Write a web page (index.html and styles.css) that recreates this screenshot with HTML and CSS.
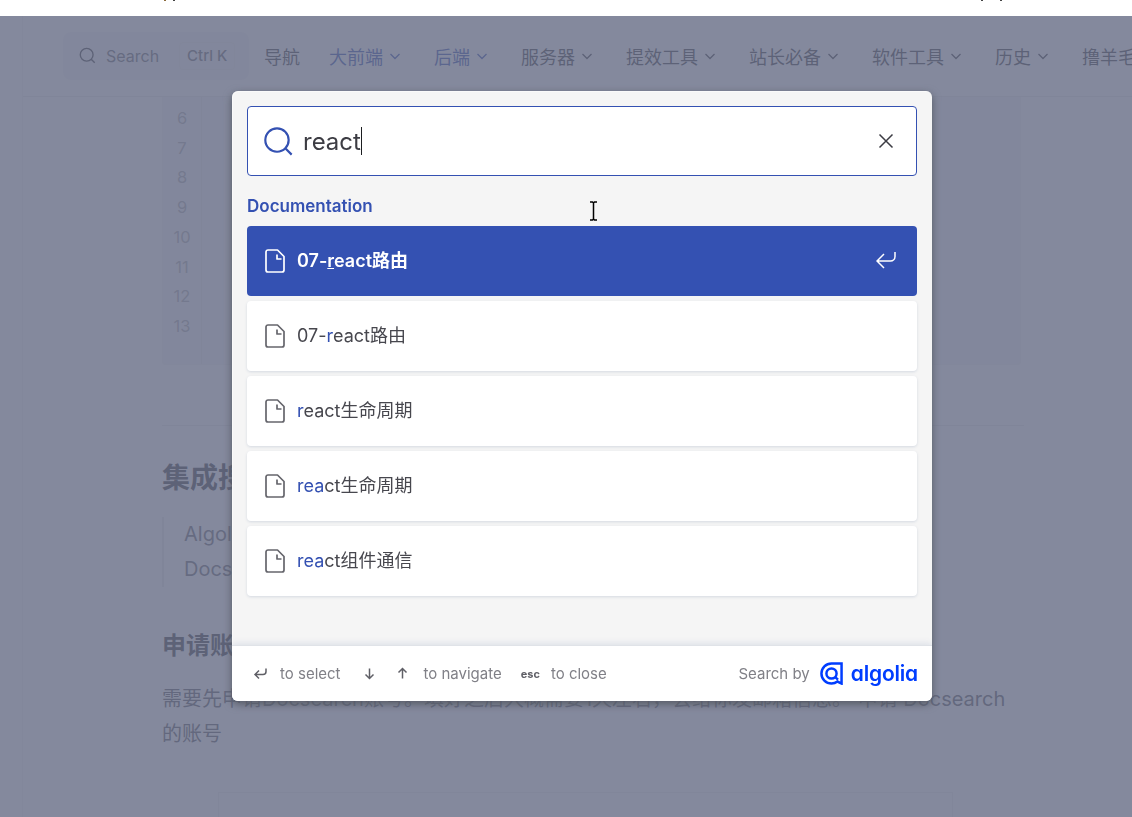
FILE: index.html
```html
<!DOCTYPE html>
<html lang="zh-CN">
<head>
    <meta charset="UTF-8">
    <meta name="viewport" content="width=device-width, initial-scale=1.0">
    <title>react 搜索</title>
    <link rel="stylesheet" href="styles.css">
</head>
<body>

    <div class="top-strip"></div>

    <div class="page">
        <header class="nav">
            <div class="nav-search">
                <svg class="nav-search-icon" viewBox="0 0 20 20"><path d="M14.386 14.386l4.088 4.088-4.088-4.088A7.533 7.533 0 1 1 3.733 3.733a7.533 7.533 0 0 1 10.653 10.653z"/></svg>
                <span class="nav-search-text">Search</span>
                <span class="nav-kbd">Ctrl K</span>
            </div>
            <a class="nav-item">导航</a>
            <a class="nav-item nav-active">大前端<svg class="chev" viewBox="0 0 12 12"><path d="M1.500 4l4.500 4.500L10.500 4"/></svg></a>
            <a class="nav-item nav-active">后端<svg class="chev" viewBox="0 0 12 12"><path d="M1.500 4l4.500 4.500L10.500 4"/></svg></a>
            <a class="nav-item">服务器<svg class="chev" viewBox="0 0 12 12"><path d="M1.500 4l4.500 4.500L10.500 4"/></svg></a>
            <a class="nav-item">提效工具<svg class="chev" viewBox="0 0 12 12"><path d="M1.500 4l4.500 4.500L10.500 4"/></svg></a>
            <a class="nav-item">站长必备<svg class="chev" viewBox="0 0 12 12"><path d="M1.500 4l4.500 4.500L10.500 4"/></svg></a>
            <a class="nav-item">软件工具<svg class="chev" viewBox="0 0 12 12"><path d="M1.500 4l4.500 4.500L10.500 4"/></svg></a>
            <a class="nav-item">历史<svg class="chev" viewBox="0 0 12 12"><path d="M1.500 4l4.500 4.500L10.500 4"/></svg></a>
            <a class="nav-item">撸羊毛</a>
        </header>

        <main class="content">
            <div class="code-block">
                <div class="line-numbers">
                    <span>6</span><span>7</span><span>8</span><span>9</span><span>10</span><span>11</span><span>12</span><span>13</span>
                </div>
            </div>
            <hr class="rule">
            <h2 class="title">集成搜索</h2>
            <blockquote class="quote">
                <p>Algolia 是一个搜索服务</p>
                <p>Docsearch 是它的文档搜索</p>
            </blockquote>
            <h3 class="subtitle">申请账号</h3>
            <p class="para">需要先申请Docsearch账号。填好之后大概需要1天左右&#65292;会给你发邮箱信息。 申请 Docsearch的账号</p>
            <div class="shot"></div>
        </main>
    </div>

    <div class="overlay"></div>

    <div class="modal">
        <div class="searchbar">
            <svg class="search-icon" viewBox="0 0 20 20"><path d="M14.386 14.386l4.088 4.088-4.088-4.088A7.533 7.533 0 1 1 3.733 3.733a7.533 7.533 0 0 1 10.653 10.653z"/></svg>
            <span class="query">react</span><span class="caret"></span>
            <svg class="close-icon" viewBox="0 0 20 20"><path d="M3.500 3.500l13 13M16.500 3.500l-13 13"/></svg>
        </div>

        <div class="hits">
            <div class="hits-label">Documentation</div>

            <div class="hit hit-selected">
                <svg class="doc-icon" viewBox="0 0 20 24"><path d="M12.500 1H3A2 2 0 0 0 1 3v18a2 2 0 0 0 2 2h14a2 2 0 0 0 2-2V7.500L12.500 1zM12 5.500V10h4.500"/></svg>
                <span class="hit-title">07-<u>r</u>eact路由</span>
                <svg class="enter-icon" viewBox="0 0 20 20"><path d="M19 1v4.500c0 2.500-2 4.500-4.500 4.500H1M8 17l-7-7 7-7"/></svg>
            </div>
            <div class="hit">
                <svg class="doc-icon" viewBox="0 0 20 24"><path d="M12.500 1H3A2 2 0 0 0 1 3v18a2 2 0 0 0 2 2h14a2 2 0 0 0 2-2V7.500L12.500 1zM12 5.500V10h4.500"/></svg>
                <span class="hit-title">07-<mark>r</mark>eact路由</span>
            </div>
            <div class="hit">
                <svg class="doc-icon" viewBox="0 0 20 24"><path d="M12.500 1H3A2 2 0 0 0 1 3v18a2 2 0 0 0 2 2h14a2 2 0 0 0 2-2V7.500L12.500 1zM12 5.500V10h4.500"/></svg>
                <span class="hit-title"><mark>r</mark>eact生命周期</span>
            </div>
            <div class="hit">
                <svg class="doc-icon" viewBox="0 0 20 24"><path d="M12.500 1H3A2 2 0 0 0 1 3v18a2 2 0 0 0 2 2h14a2 2 0 0 0 2-2V7.500L12.500 1zM12 5.500V10h4.500"/></svg>
                <span class="hit-title"><mark>rea</mark>ct生命周期</span>
            </div>
            <div class="hit">
                <svg class="doc-icon" viewBox="0 0 20 24"><path d="M12.500 1H3A2 2 0 0 0 1 3v18a2 2 0 0 0 2 2h14a2 2 0 0 0 2-2V7.500L12.500 1zM12 5.500V10h4.500"/></svg>
                <span class="hit-title"><mark>rea</mark>ct组件通信</span>
            </div>
        </div>

        <footer class="footer">
            <div class="footer-keys">
                <svg class="key-icon key-first" viewBox="0 0 15 15"><path d="M13 2.500v3c0 1.700-1.300 3-3 3H2.500M6 4.500l-4 4 4 4"/></svg>
                <span class="key-label">to select</span>
                <svg class="key-icon key-down" viewBox="0 0 15 15"><path d="M7.500 2.500v10M3.500 8.500l4 4 4-4"/></svg>
                <svg class="key-icon key-up" viewBox="0 0 15 15"><path d="M7.500 12.500v-10M3.500 6.500l4-4 4 4"/></svg>
                <span class="key-label key-nav">to navigate</span>
                <span class="key-esc">esc</span>
                <span class="key-label">to close</span>
            </div>
            <div class="footer-logo">
                <span class="search-by">Search by</span>
                <svg class="algolia-mark" viewBox="0 0 24 24"><path d="M22.500 1.500H12A10.500 10.500 0 1 0 12 22.500c2.300 0 4.500-.8 6.200-2.100l4.300 2.100z"/><circle cx="12" cy="12" r="5.300"/><path d="M15.800 15.800l3 2.600"/></svg>
                <span class="algolia-word">algolia</span>
            </div>
        </footer>
    </div>

    <svg class="ibeam" viewBox="0 0 9 20"><path d="M1 1h2.500l1 1 1-1H8M4.500 2v16M1 19h2.500l1-1 1 1H8"/></svg>

</body>
</html>
```

FILE: styles.css
```css
* {
    box-sizing: border-box;
}
html, body {
    margin: 0;
    height: 817px;
    overflow: hidden;
}
body {
    font-family: Inter, "Noto Sans CJK SC", sans-serif;
    color: #3c3c43;
    background: #fff;
}
/* bottoms of clipped glyphs along the top edge */
.top-strip {
    height: 16px;
    background-color: #fff;
    background-image:
        linear-gradient(#8a6a3a, #8a6a3a),
        linear-gradient(#444, #444),
        linear-gradient(#444, #444),
        linear-gradient(#444, #444);
    background-size: 2px 1px, 2px 1px, 2px 1px, 2px 1px;
    background-position: 164px 0, 173px 0, 981px 0, 1000px 0;
    background-repeat: no-repeat;
}

/* page behind the dialog */
.page {
    height: 801px;
    overflow: hidden;
    margin-left: 22px;
    border-left: 1px solid #f2f2f2;
}
.nav {
    display: flex;
    align-items: center;
    height: 81px;
    padding: 0 0 1px 40px;
    border-bottom: 1px solid #ececec;
    white-space: nowrap;
    font-size: 18px;
}
.nav-search {
    display: flex;
    flex: none;
    align-items: center;
    width: 186px;
    height: 48px;
    margin-right: 15px;
    padding-left: 16px;
    border-radius: 8px;
    background: #f6f6f7;
}
.nav-search-icon {
    flex: none;
    width: 17px;
    height: 17px;
    fill: none;
    stroke: #3c3c43;
    stroke-width: 1.6;
}
.nav-search-text {
    margin-left: 10px;
    font-size: 16px;
    color: #6b6b73;
}
.nav-kbd {
    margin-left: 20px;
    padding: 0 7px;
    height: 28px;
    line-height: 26px;
    font-size: 15px;
    font-weight: 500;
    color: #6b6b73;
    border: 1px solid #eeeeef;
    border-radius: 4px;
}
.nav-item {
    display: flex;
    flex: none;
    align-items: center;
    margin-right: 30px;
    color: #3c3c43;
}
.nav-search + .nav-item {
    margin-right: 29px;
}
.nav-active {
    color: #3451b2;
}
.chev {
    width: 12px;
    height: 12px;
    margin: 0 3px 0 6px;
    fill: none;
    stroke: currentColor;
    stroke-width: 1.300;
}
.content {
    padding-left: 139px;
    width: 998px;
    font-size: 20px;
    line-height: 35px;
}
.code-block {
    height: 268px;
    background: #f6f6f7;
    border-radius: 0 0 4px 4px;
    border: 1px solid #f2f2f2;
    border-top: 0;
}
.line-numbers {
    display: flex;
    flex-direction: column;
    width: 39px;
    height: 100%;
    padding-top: 7px;
    border-right: 1px solid #ececec;
    text-align: center;
    color: #aeaeb2;
    font-size: 16.500px;
    line-height: 29.700px;
}
.rule {
    height: 1px;
    margin: 60px -3px 0 0;
    border: 0;
    background: #e8e8e8;
}
.title {
    margin: 30px 0 0;
    font-size: 28px;
    line-height: 44px;
    font-weight: 700;
}
.quote {
    margin: 17px 0 0;
    padding-left: 20px;
    border-left: 2px solid #ececec;
    color: #6b6b73;
}
.quote p {
    margin: 0;
}
.subtitle {
    margin: 41px 0 0;
    font-size: 24px;
    line-height: 36px;
    font-weight: 700;
}
.para {
    margin: 18px 0 0;
    line-height: 35.400px;
    color: #5c5c63;
}
.shot {
    height: 200px;
    margin: 39px 68px 0 56px;
    border: 1px solid #f0f0f0;
}

/* dialog */
.overlay {
    position: fixed;
    left: 0;
    right: 0;
    top: 16px;
    bottom: 0;
    background: rgba(101, 108, 133, 0.8);
}
.modal {
    position: fixed;
    left: 232px;
    top: 91px;
    width: 700px;
    height: 610px;
    display: flex;
    flex-direction: column;
    border-radius: 6px;
    background: #f5f5f5;
    box-shadow: inset 1px 1px 0 0 rgba(255, 255, 255, 0.5), 0 3px 8px 0 #555a64;
    overflow: hidden;
}
.searchbar {
    display: flex;
    align-items: center;
    height: 70px;
    margin: 15px 15px 0;
    padding: 0 16px 0 15px;
    background: #fff;
    border: 1px solid #3451b2;
    border-radius: 4px;
}
.search-icon {
    flex: none;
    width: 31px;
    height: 31px;
    fill: none;
    stroke: #3451b2;
    stroke-width: 1.400;
    stroke-linecap: round;
}
.query {
    margin-left: 9px;
    padding-top: 1px;
    font-size: 24px;
    line-height: 28px;
    color: #3c3c43;
}
.caret {
    width: 1px;
    height: 28px;
    background: #1c1e21;
}
.close-icon {
    width: 20px;
    height: 20px;
    margin-left: auto;
    margin-right: 4px;
    fill: none;
    stroke: #3c3c43;
    stroke-width: 1.500;
}
.hits {
    flex: 1;
    padding: 20px 15px 0;
}
.hits-label {
    height: 21px;
    margin-bottom: 9px;
    font-size: 17px;
    line-height: 21px;
    font-weight: 600;
    color: #3451b2;
}
.hit {
    display: flex;
    align-items: center;
    height: 70px;
    margin-bottom: 5px;
    padding: 0 18px;
    border-radius: 4px;
    background: #fff;
    box-shadow: 0 1px 3px 0 #d4d9e1;
    color: #47474e;
}
.hit-selected {
    background: #3451b2;
    color: #fff;
    box-shadow: none;
}
.doc-icon {
    flex: none;
    width: 20px;
    height: 24px;
    fill: none;
    stroke: #65656c;
    stroke-width: 1.700;
    stroke-linejoin: round;
}
.hit-selected .doc-icon {
    stroke: #fff;
}
.hit-title {
    margin-left: 12px;
    font-size: 18px;
    line-height: 22px;
}
.hit-selected .hit-title {
    font-weight: 600;
}
.hit-title mark {
    background: none;
    color: #3451b2;
}
.enter-icon {
    width: 20px;
    height: 20px;
    margin-left: auto;
    margin-right: 3px;
    fill: none;
    stroke: #fff;
    stroke-width: 1.500;
}
.footer {
    display: flex;
    align-items: center;
    justify-content: space-between;
    height: 55px;
    padding: 0 14px 0 21px;
    background: #fff;
    box-shadow: 0 -1px 0 0 #e0e3e8, 0 -3px 6px 0 rgba(69, 98, 155, 0.12);
}
.footer-keys {
    display: flex;
    align-items: center;
    font-size: 15px;
    color: #808087;
}
.key-icon {
    width: 15px;
    height: 15px;
    fill: none;
    stroke: #5f5f66;
    stroke-width: 1.500;
}
.key-label {
    margin-left: 12px;
}
.key-nav {
    margin-left: 14px;
}
.key-down {
    margin-left: 21px;
}
.key-up {
    margin-left: 18px;
}
.key-esc {
    margin-left: 19px;
    font-size: 11px;
    font-weight: 700;
    color: #5f5f66;
}
.key-esc + .key-label {
    margin-left: 11px;
}
.footer-logo {
    display: flex;
    align-items: center;
}
.search-by {
    font-size: 15px;
    color: #808087;
}
.algolia-mark {
    width: 23px;
    height: 23px;
    margin-left: 10px;
    fill: none;
    stroke: #003dff;
    stroke-width: 2.600;
}
.algolia-word {
    margin-left: 8px;
    font-family: Inter, sans-serif;
    font-feature-settings: "cv11" 1;
    font-size: 21px;
    line-height: 24px;
    font-weight: 600;
    letter-spacing: -0.2px;
    color: #003dff;
}
.ibeam {
    position: fixed;
    left: 589px;
    top: 201px;
    width: 9px;
    height: 20px;
    fill: none;
    stroke: #000;
    stroke-width: 1.500;
}
```
